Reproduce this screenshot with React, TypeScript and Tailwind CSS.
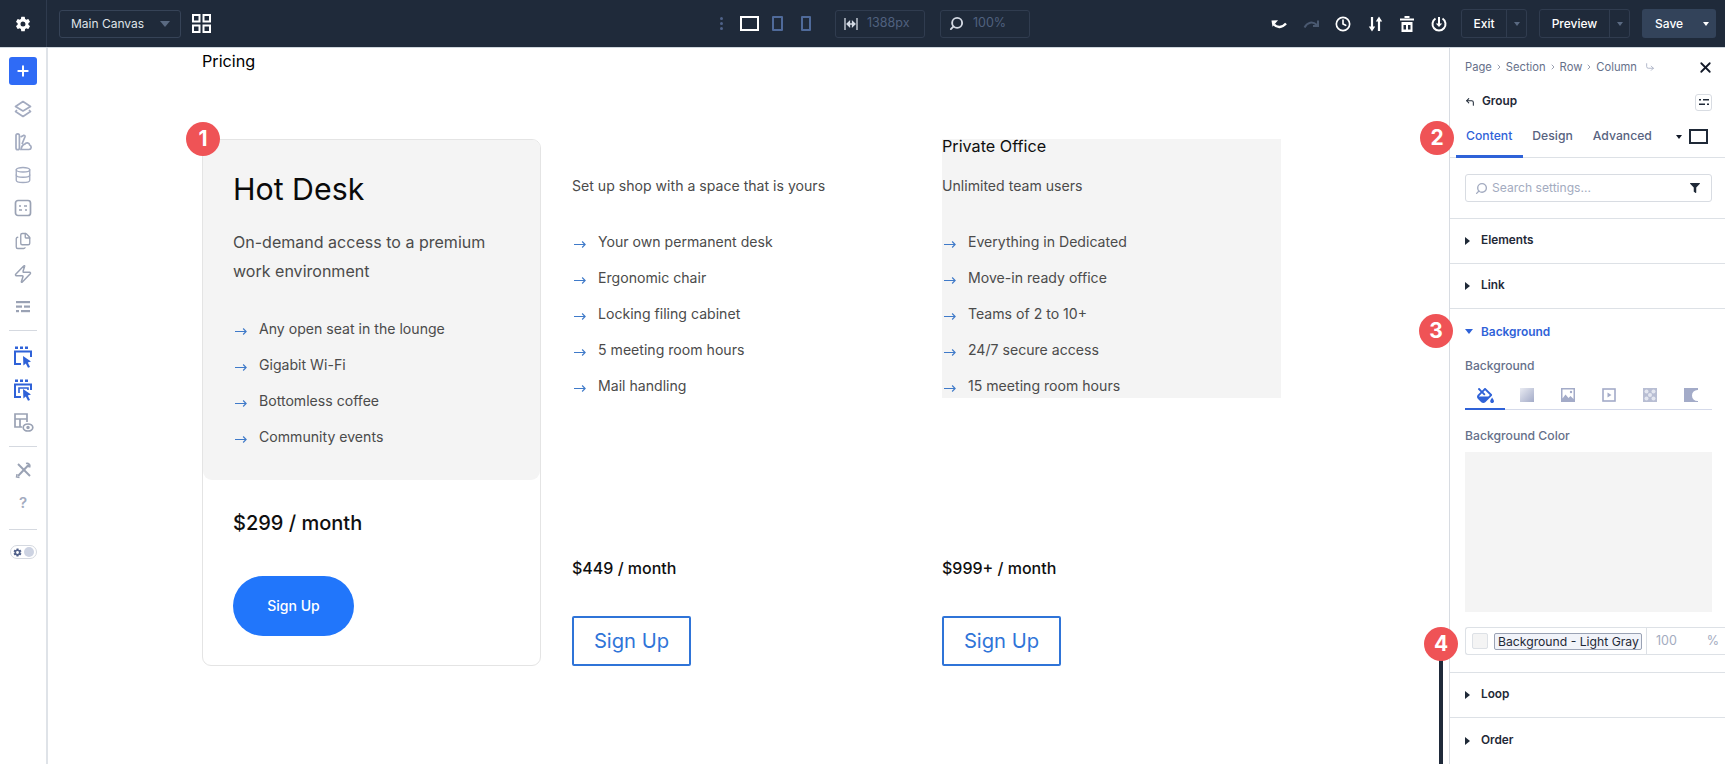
import React from "react";
import { Database, Zap, Files, Clock, X, Search, Plus, CornerDownRight, CornerUpLeft, ChevronRight } from "lucide-react";
import { IoSettingsSharp } from "react-icons/io5";
import { FaFillDrip, FaFilter } from "react-icons/fa";

const Tri = ({ c = "border-t-[#5a6a82]", w = "border-x-[5px] border-t-[6px]" }: { c?: string; w?: string }) => (
  <span className={`inline-block w-0 h-0 border-x-transparent ${w} ${c}`} />
);
const TriR = () => <span className="inline-block w-0 h-0 border-y-[4px] border-y-transparent border-l-[5px] border-l-[#1f2937]" />;

const Cursor = ({ double }: { double?: boolean }) => (
  <svg width="24" height="24" viewBox="0 0 24 24" fill="none">
    <rect x="4" y="1.5" width="3" height="2.5" fill="#2f62d8" /><rect x="9" y="1.5" width="3" height="2.5" fill="#2f62d8" /><rect x="14" y="1.5" width="3" height="2.5" fill="#2f62d8" />
    <path d="M10 19H4V6.5h16V12" stroke="#2f62d8" strokeWidth="2" />
    {double && <path d="M8 15V10h9v2" stroke="#2f62d8" strokeWidth="1.6" />}
    <path d="M12 11l8 5.5-3.2 1L19 22l-2 .8-2.2-4.3-2.4 2z" fill="#2f62d8" />
  </svg>
);

const Side = ({ children }: { children: React.ReactNode }) => <div className="h-[33px] flex items-center justify-center text-[#a3abc0]">{children}</div>;
const Rule = () => <div className="w-[28px] h-px bg-[#d5d9e0] my-[7px] mx-auto" />;

function Sidebar() {
  return (
    <aside className="w-[48px] shrink-0 border-r-2 border-[#dfe3e8] bg-white pt-[9px] flex flex-col">
      <div className="w-[28px] h-[28px] mx-auto rounded-[3px] bg-[#2f6bf6] flex items-center justify-center text-white mb-[7px]"><Plus size={16} strokeWidth={3} /></div>
      <Side>
        <svg width="18" height="18" viewBox="0 0 18 18" fill="none" stroke="currentColor" strokeWidth="1.7" strokeLinejoin="round"><path d="M9 1.500 16.500 6.500 9 11 1.500 6.500z" /><path d="M3 10 1.500 11.500 9 16.500l7.500-5L15 10" /></svg>
      </Side>
      <Side>
        <svg width="20" height="20" viewBox="0 0 20 20" fill="none" stroke="currentColor" strokeWidth="1.7"><path d="M3 3.500a1.700 1.700 0 0 1 3.400 0V16a1.700 1.700 0 0 1-3.400 0z" /><path d="M7.500 5l3-1.600c1-.4 1.800.4 1.500 1.400L9 12" /><path d="M8 17.500h8c2.500 0 3-3.500.7-4.500-.3-2.500-3.700-3-5-.8-1.500.3-3 1.800-3.700 5.300z" /></svg>
      </Side>
      <Side><Database size={18} strokeWidth={1.8} /></Side>
      <Side>
        <svg width="18" height="18" viewBox="0 0 18 18" fill="none" stroke="#9aa2b4" strokeWidth="1.700"><rect x="1.500" y="1.500" width="15" height="15" rx="2.500" /><path d="M5 7h2M10 7h3M5 11h3M11 11h2" /></svg>
      </Side>
      <Side><Files size={18} strokeWidth={1.8} className="text-[#9aa2b4]" /></Side>
      <Side><Zap size={20} strokeWidth={1.8} className="text-[#9aa2b4]" /></Side>
      <Side>
        <svg width="16" height="14" viewBox="0 0 16 14" fill="#9aa2b4"><rect x="1" y="1" width="14" height="2.200" /><rect x="1" y="5.500" width="6" height="2.200" /><rect x="9" y="5.500" width="6" height="2.200" /><rect x="1" y="10" width="3" height="2.200" /><rect x="6" y="10" width="9" height="2.200" /></svg>
      </Side>
      <Rule />
      <div className="h-[2px]" />
      <Side><Cursor /></Side>
      <Side><Cursor double /></Side>
      <Side>
        <svg width="22" height="22" viewBox="0 0 22 22" fill="none" stroke="#9aa2b4" strokeWidth="1.700"><path d="M10 15H3V2h12v8M3 7h12M8 7v8" /><ellipse cx="16" cy="15.500" rx="4.800" ry="3.500" fill="#fff" /><circle cx="16" cy="15.500" r=".9" fill="#9aa2b4" /></svg>
      </Side>
      <Rule />
      <Side>
        <svg width="17" height="17" viewBox="0 0 17 17" fill="none" stroke="#9aa2b4" strokeWidth="2"><path d="M3 2l12 12" /><path d="M14 2.500 3 14" /><path d="M11 1.500c2.500-1 4.500 1 3.800 3.300l-2.300-.6M2 12l-.5 3 3 .5" strokeWidth="1.400" /></svg>
      </Side>
      <Side><span className="text-[15px] font-semibold text-[#a3abc0]">?</span></Side>
      <div className="h-[2px]" />
      <Rule />
      <div className="mx-auto mt-[8px] w-[27px] h-[14px] rounded-full border border-[#d5d9e0] flex items-center justify-between px-[2px]">
        <IoSettingsSharp size={9} className="text-[#51618a]" />
        <span className="w-[10px] h-[10px] rounded-full bg-[#cdd3e2]" />
      </div>
    </aside>
  );
}

const Tool = ({ children }: { children: React.ReactNode }) => <span className="w-[32px] flex items-center justify-center">{children}</span>;

function TopBar() {
  return (
    <header className="h-[48px] shrink-0 bg-[#1f2a3a] border-b border-[#cfd6dd] flex items-center text-white">
      <div className="w-[47px] h-full flex items-center justify-center border-r border-[#2f3b4e]"><IoSettingsSharp size={16} /></div>
      <div className="ml-[12px] w-[122px] h-[28px] rounded-[3px] border border-[#364357] flex items-center justify-between pl-[11px] pr-[10px] text-[12px] text-[#dfe3e8]">Main Canvas <Tri /></div>
      <svg className="ml-[11px]" width="19" height="19" viewBox="0 0 19 19" fill="none" stroke="#fff" strokeWidth="2"><rect x="1" y="1" width="6.500" height="6.500" /><rect x="11.500" y="1" width="6.500" height="6.500" /><rect x="1" y="11.500" width="6.500" height="6.500" /><rect x="11.500" y="11.500" width="6.500" height="6.500" /></svg>

      <div className="ml-[509px] flex flex-col gap-[2px]"><i className="w-[3px] h-[3px] rounded-full bg-[#4f6288]" /><i className="w-[3px] h-[3px] rounded-full bg-[#4f6288]" /><i className="w-[3px] h-[3px] rounded-full bg-[#4f6288]" /></div>
      <div className="ml-[17px] w-[19px] h-[15px] border-2 border-white" />
      <div className="ml-[13px] w-[11px] h-[15px] border-2 border-[#4f6a9a] rounded-[1px]" />
      <div className="ml-[18px] w-[10px] h-[15px] border-2 border-[#4f6a9a] rounded-[1px]" />
      <div className="ml-[24px] w-[90px] h-[28px] rounded-[3px] border border-[#303c4f] flex items-center pl-[8px] gap-[9px] text-[12.500px] text-[#50617f]">
        <svg width="14" height="12" viewBox="0 0 14 12" fill="none" stroke="#d4dae4" strokeWidth="1.300"><path d="M1 0v12M13 0v12M3 6h8" /><path d="M3 6l2.500-2.500v5zM11 6L8.500 3.500v5z" fill="#d4dae4" /></svg>
        1388px
      </div>
      <div className="ml-[15px] w-[90px] h-[28px] rounded-[3px] border border-[#303c4f] flex items-center pl-[8px] gap-[9px] text-[12.500px] text-[#50617f]">
        <Search size={15} strokeWidth={3} className="text-[#d4dae4] -scale-x-100" />
        100%
      </div>

      <div className="ml-[233px] flex items-center">
        <Tool><svg width="16" height="12" viewBox="0 0 16 12" fill="none" stroke="#fff" strokeWidth="2.400"><path d="M3 6.500c3 3.500 8 3.500 12-1" /><path d="M.5 2.500 7 2.200 1.500 8.800z" fill="#fff" strokeWidth="0" /></svg></Tool>
        <Tool><svg width="16" height="12" viewBox="0 0 16 12" fill="none" stroke="#4a5970" strokeWidth="2"><path d="M1.500 9.500C4.500 4 9.500 3 14 7" /><path d="M15 2.500V8h-5" /></svg></Tool>
        <Tool><Clock size={16} strokeWidth={2.500} /></Tool>
        <Tool><svg width="15" height="16" viewBox="0 0 15 16" fill="#fff" stroke="#fff"><path d="M4 1v11" strokeWidth="2.200" /><path d="M.8 10.500h6.400L4 15.500zM7.800 5.500h6.400L11 .5z" strokeWidth="0" /><path d="M11 5v10" strokeWidth="2.200" /></svg></Tool>
        <Tool><svg width="14" height="16" viewBox="0 0 14 16" fill="#fff"><rect x="0" y="2.500" width="14" height="2" /><rect x="4.500" y="0" width="5" height="2" /><path fillRule="evenodd" d="M1.500 6h11v10h-11zM3.500 9v4.500h2.500V9zM8 9v4.500h2.500V9z" /></svg></Tool>
        <Tool><svg width="16" height="16" viewBox="0 0 16 16" fill="none" stroke="#fff" strokeWidth="2"><path d="M4.500 2.500a6.500 6.500 0 1 0 7 0" /><path d="M8 1v8.500" /><path d="M4.800 7.500 8 11l3.200-3.500z" fill="#fff" strokeWidth="0" /></svg></Tool>
      </div>
      <div className="ml-[6px] w-[66px] h-[29px] rounded-[3px] border border-[#303c4f] flex items-stretch text-[12px] font-medium">
        <span className="flex-1 flex items-center justify-center border-r border-[#303c4f]">Exit</span>
        <span className="w-[19px] flex items-center justify-center"><Tri w="border-x-[3px] border-t-[4px]" /></span>
      </div>
      <div className="ml-[12px] w-[91px] h-[29px] rounded-[3px] border border-[#303c4f] flex items-stretch text-[12px] font-medium">
        <span className="flex-1 flex items-center justify-center border-r border-[#303c4f]">Preview</span>
        <span className="w-[19px] flex items-center justify-center"><Tri w="border-x-[3px] border-t-[4px]" /></span>
      </div>
      <div className="ml-[12px] w-[74px] h-[29px] rounded-[3px] bg-[#33435a] flex items-center pl-[13px] gap-[20px] text-[12px] font-medium">Save <Tri c="border-t-white" w="border-x-[3px] border-t-[4px]" /></div>
    </header>
  );
}

const Item = ({ t }: { t: string }) => (
  <li className="h-[36px] flex items-center text-[14.100px] text-[#4b4b4b]">
    <svg width="12" height="9" viewBox="0 0 14 10" fill="none" stroke="#3f7ac9" strokeWidth="1.300" className="ml-[2px] mr-[12px] mt-[4px] shrink-0"><path d="M0 5h13M9.500 1.500 13 5 9.500 8.500" /></svg>{t}
  </li>
);

const Outline = () => (
  <button className="mt-[34px] w-[119px] h-[50px] border-2 border-[#2f74d8] rounded-[2px] text-[20.200px] text-[#2f74d8]">Sign Up</button>
);

function Canvas() {
  return (
    <main className="flex-1 bg-white pl-[154px] text-black">
      <div className="text-[16.200px] font-normal leading-[26px]">Pricing</div>
      <div className="mt-[65px] flex gap-[31px] items-start">
        <div className="w-[339px] h-[527px] rounded-[9px] border border-[#e4e4e4] overflow-hidden">
          <div className="h-[340px] bg-[#f4f4f4] rounded-b-[9px] pl-[30px] pt-[29px]">
            <h2 className="text-[30.300px] font-normal leading-[40px] text-[#0a0a0a]">Hot Desk</h2>
            <p className="mt-[19px] text-[16.050px] leading-[29px] text-[#4b4b4b] w-[270px]">On-demand access to a premium work environment</p>
            <ul className="mt-[25px]">
              {["Any open seat in the lounge", "Gigabit Wi-Fi", "Bottomless coffee", "Community events"].map((t) => <Item key={t} t={t} />)}
            </ul>
          </div>
          <div className="pl-[30px]">
            <div className="mt-[28px] text-[20px] font-medium leading-[30px] text-[#0f0f0f]">$299 / month</div>
            <button className="mt-[38px] block w-[121px] h-[60px] pb-[2px] rounded-full bg-[#2176fb] text-white text-[14px] font-medium">Sign Up</button>
          </div>
        </div>

        <div className="w-[339px] h-[527px] flex flex-col">
          <p className="mt-[33px] text-[14.100px] leading-[28px] text-[#4b4b4b]">Set up shop with a space that is yours</p>
          <ul className="mt-[24px]">
            {["Your own permanent desk", "Ergonomic chair", "Locking filing cabinet", "5 meeting room hours", "Mail handling"].map((t) => <Item key={t} t={t} />)}
          </ul>
          <div className="mt-auto text-[16px] font-medium leading-[28px] text-[#0f0f0f]">$449 / month</div>
          <Outline />
        </div>

        <div className="w-[339px] h-[527px] flex flex-col">
          <div className="h-[259px] bg-[#f4f4f4]">
            <h3 className="text-[16.200px] font-normal leading-[14px] text-[#0f0f0f]">Private Office</h3>
            <p className="mt-[19px] text-[14.100px] leading-[28px] text-[#4b4b4b]">Unlimited team users</p>
            <ul className="mt-[24px]">
              {["Everything in Dedicated", "Move-in ready office", "Teams of 2 to 10+", "24/7 secure access", "15 meeting room hours"].map((t) => <Item key={t} t={t} />)}
            </ul>
          </div>
          <div className="mt-auto text-[16px] font-medium leading-[28px] text-[#0f0f0f]">$999+ / month</div>
          <Outline />
        </div>
      </div>
    </main>
  );
}

const Acc = ({ t, h = "h-[45px]" }: { t: string; h?: string }) => (
  <div className={`${h} border-b border-[#dde1e6] pl-[15px] flex items-center gap-[11px] text-[11.800px] font-semibold text-[#1f2937]`}><TriR />{t}</div>
);

function Panel() {
  return (
    <section className="w-[276px] shrink-0 border-l border-[#d8dce2] bg-white">
      <div className="h-[39px] pl-[15px] pr-[11px] flex items-center justify-between text-[11.200px] text-[#66708a]">
        <span className="flex items-center gap-[3px]">Page <ChevronRight size={8} />Section <ChevronRight size={8} />Row <ChevronRight size={8} />Column <CornerDownRight size={10} className="ml-[5px] text-[#a3abc0]" /></span>
        <X size={17} strokeWidth={2.500} className="text-[#111827]" />
      </div>
      <div className="h-[27px] pt-[3px] pl-[15px] pr-[13px] flex items-center justify-between text-[11.800px] font-semibold text-[#1f2937]">
        <span className="flex items-center gap-[7px]"><CornerUpLeft size={10} strokeWidth={2.500} />Group</span>
        <span className="w-[17px] h-[17px] rounded-[3px] border border-[#d8dce2] flex items-center justify-center">
          <svg width="10" height="8" viewBox="0 0 10 8" fill="#1f2937"><rect x="0" y="1" width="2" height="1.500" /><rect x="4" y="1" width="6" height="1.500" /><rect x="0" y="5.500" width="6" height="1.500" /><rect x="8" y="5.500" width="2" height="1.500" /></svg>
        </span>
      </div>
      <div className="h-[44px] pt-[2px] border-b border-[#dde1e6] flex items-center relative text-[12.200px] font-medium text-[#586380] pl-[16px] pr-[17px]">
        <span className="text-[#2f62d8]">Content</span>
        <span className="ml-[20px]">Design</span>
        <span className="ml-[20px]">Advanced</span>
        <span className="ml-auto mr-[7px] mb-[2px]"><Tri c="border-t-[#111827]" w="border-x-[3.500px] border-t-[4px]" /></span>
        <span className="w-[19px] h-[15px] border-2 border-[#1f2937]" />
        <span className="absolute left-[6px] bottom-[-1px] w-[67px] h-[3px] bg-[#2f62d8]" />
      </div>
      <div className="h-[61px] pl-[15px] flex items-center border-b border-[#dde1e6]">
        <div className="w-[247px] h-[28px] rounded-[3px] border border-[#d8dce2] flex items-center pl-[9px] pr-[11px] text-[12.100px] text-[#a3abc0]">
          <Search size={13} strokeWidth={2.500} className="-scale-x-100 mr-[4px]" />Search settings...
          <FaFilter size={10} className="ml-auto text-[#1f2937]" />
        </div>
      </div>
      <Acc t="Elements" />
      <Acc t="Link" />
      <div className="pl-[15px] border-b border-[#dde1e6] h-[364px]">
        <div className="h-[45px] flex items-center gap-[8px] text-[11.900px] font-semibold text-[#2f62d8]"><Tri c="border-t-[#2f62d8]" w="border-x-[4px] border-t-[5px]" />Background</div>
        <div className="mt-[3px] text-[12.100px] font-medium leading-[18px] text-[#66708a]">Background</div>
        <div className="mt-[9px] w-[247px] h-[26px] border-b border-[#d5daea] grid grid-cols-6 items-center relative pb-[3px]">
          <span className="flex justify-center"><FaFillDrip size={17} className="text-[#2f62d8]" /></span>
          <span className="justify-self-center w-[14px] h-[14px] bg-gradient-to-br from-[#e9ebf2] to-[#a3abc8]" />
          <svg className="justify-self-center" width="14" height="14" viewBox="0 0 14 14" fill="#a3abc8"><path fillRule="evenodd" d="M0 0h14v14H0zM1.500 1.500v9l3-4 3 3.500 2-2 3 3v-9.500z" /><circle cx="10" cy="4" r="1.200" /></svg>
          <svg className="justify-self-center" width="14" height="14" viewBox="0 0 14 14" fill="none" stroke="#a3abc8" strokeWidth="1.600"><rect x="1" y="1" width="12" height="12" /><path d="M5.500 4.500 9.500 7l-4 2.500z" fill="#a3abc8" strokeWidth="0" /></svg>
          <svg className="justify-self-center" width="14" height="14" viewBox="0 0 14 14" fill="#b8bed3"><rect width="14" height="14" /><g fill="#e4e7f0"><circle cx="3.500" cy="3.500" r="2" /><circle cx="10.500" cy="3.500" r="2" /><circle cx="3.500" cy="10.500" r="2" /><circle cx="10.500" cy="10.500" r="2" /><circle cx="7" cy="7" r="2" /></g></svg>
          <span className="justify-self-center w-[14px] h-[14px] bg-[#a3abc8] flex justify-end items-center"><i className="w-[6px] h-[11px] bg-white rounded-l-full" /></span>
          <span className="absolute left-0 bottom-[-1px] w-[40px] h-[2px] bg-[#2f62d8]" />
        </div>
        <div className="mt-[17px] text-[12.200px] font-medium leading-[18px] text-[#66708a]">Background Color</div>
        <div className="mt-[7px] w-[247px] h-[160px] bg-[#f4f4f4]" />
        <div className="mt-[15px] w-[260px] h-[28px] rounded-l-[3px] border border-[#dde1e6] border-r-0 flex items-center">
          <span className="ml-[6px] w-[16px] h-[16px] rounded-[2px] border border-[#dde1e6] bg-[#f4f4f4]" />
          <span className="ml-[6px] h-[17px] w-[148px] rounded-[2px] border border-[#9aa2b4] bg-[#f1f3f9] text-[12.200px] leading-[15px] pl-[3px] text-[#1f2937] whitespace-nowrap">Background - Light Gray</span>
          <span className="ml-[4px] h-full border-l border-[#dde1e6] pl-[9px] pr-[6px] flex items-center justify-between flex-1 text-[12.500px] text-[#a3abc0]">100<span>%</span></span>
        </div>
      </div>
      <Acc t="Loop" />
      <Acc t="Order" h="h-[47px]" />
    </section>
  );
}

const Badge = ({ n, cls }: { n: string; cls: string }) => (
  <div className={`absolute w-[34px] h-[34px] rounded-full bg-[#ef5356] text-white text-[21px] font-bold flex items-center justify-center ${cls}`}>{n}</div>
);

export default function App() {
  return (
    <div className="relative w-[1725px] h-[764px] overflow-hidden flex flex-col bg-white font-['Inter','Liberation_Sans',sans-serif]">
      <TopBar />
      <div className="flex flex-1 min-h-0">
        <Sidebar />
        <Canvas />
        <Panel />
      </div>
      <Badge n="1" cls="left-[186px] top-[122px]" />
      <Badge n="2" cls="left-[1420px] top-[121px]" />
      <Badge n="3" cls="left-[1419px] top-[314px]" />
      <div className="absolute left-[1439px] top-[650px] w-[4px] h-[114px] bg-[#1f2a3a]" />
      <Badge n="4" cls="left-[1424px] top-[627px]" />
    </div>
  );
}
